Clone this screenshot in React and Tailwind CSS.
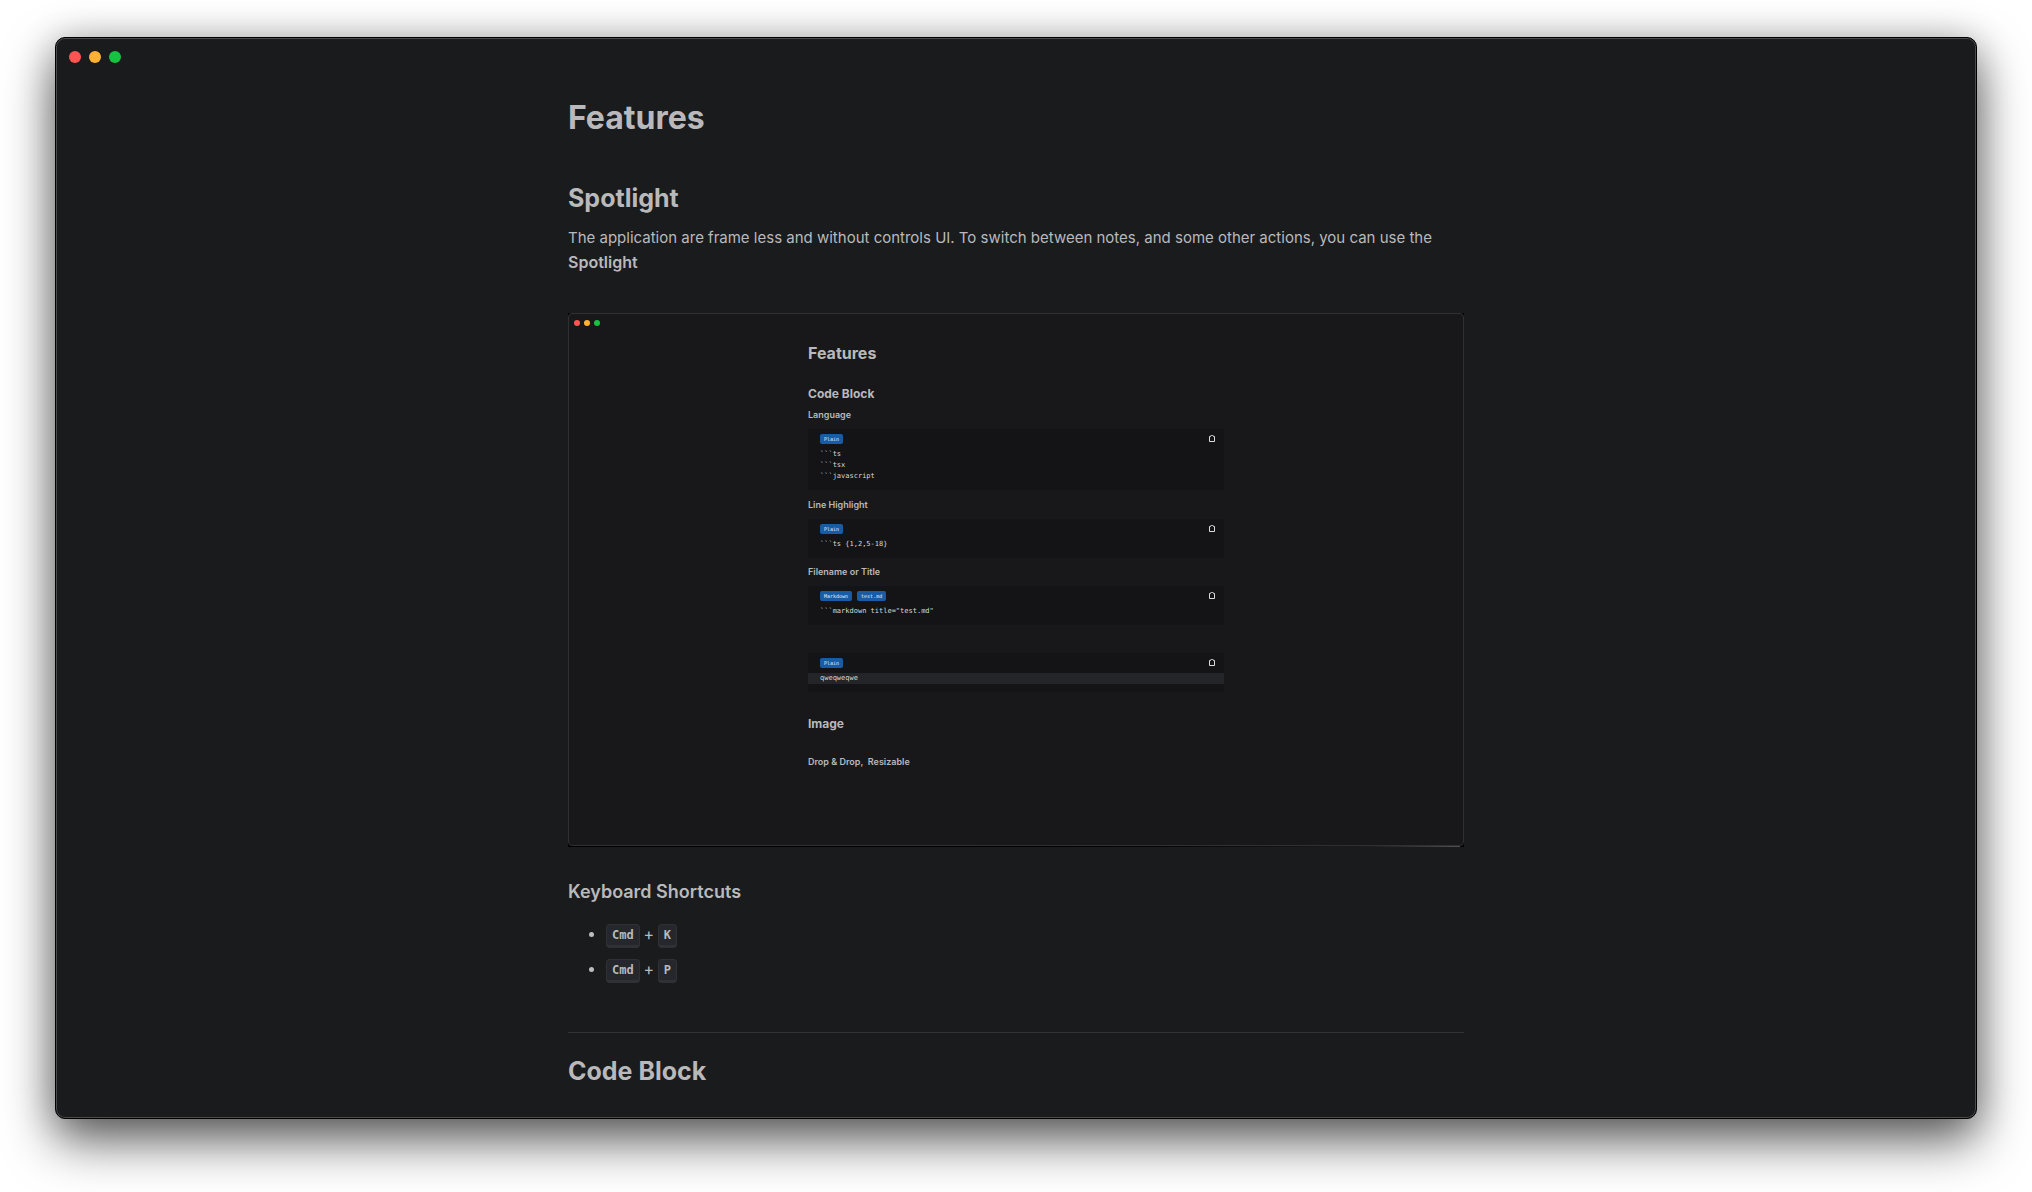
const LIGHTS = [
  { name: "Close", color: "bg-[#ff5552]" },
  { name: "Minimize", color: "bg-[#ffb134]" },
  { name: "Zoom", color: "bg-[#17c240]" },
];

function WindowControls() {
  return (
    <div className="flex gap-2 pt-[13px] pl-[13px]">
      {LIGHTS.map((l) => (
        <button key={l.name} type="button" aria-label={l.name} className={`size-3 rounded-full ${l.color}`} />
      ))}
    </div>
  );
}

function ClipboardIcon() {
  return (
    <svg viewBox="0 0 6 8" className="h-2 w-1.5" fill="none">
      <path d="M1.5 2.5H0.5V7.5H5.5V2.5H4.5" stroke="#dcdcde" strokeWidth="1" strokeLinejoin="round" />
      <path d="M1 3V2L2 1H4L5 2V3H4V2H2V3Z" fill="#b4b4b6" />
    </svg>
  );
}

function CodeBlock({ tags, lines, highlight, className }) {
  return (
    <div
      className={`rounded-xs bg-[#141416] pt-[5px] pb-2 font-['DejaVu_Sans_Mono','Liberation_Mono',monospace] ${className}`}
    >
      <div className="flex items-start justify-between pr-[9px] pl-3">
        <div className="flex gap-[5px]">
          {tags.map((t) => (
            <span key={t} className="rounded-xs bg-[#195ca6] px-1 text-[5px] leading-[10px] text-[#e6f0fa]">
              {t}
            </span>
          ))}
        </div>
        <button type="button" aria-label="Copy code" className="flex">
          <ClipboardIcon />
        </button>
      </div>
      <pre className="mt-[5px] font-[inherit] text-[7px] leading-[11px] text-[#d8d8d8]">
        {lines.map((line) => (
          <code key={line} className={`block pl-3 font-[inherit] ${highlight ? "bg-[#242529]" : ""}`}>
            {line}
          </code>
        ))}
      </pre>
    </div>
  );
}

function MiniHeading({ children, className }) {
  return <h5 className={`text-[9px] leading-3 font-semibold ${className}`}>{children}</h5>;
}

function AppPreview() {
  return (
    <figure className="mt-[38px] bg-black">
      <div className="rounded border border-[#303032] bg-[#18181a] pb-[77px]">
        <div className="flex gap-1 pt-1.5 pl-[5px]">
          {LIGHTS.map((l) => (
            <span key={l.name} className={`size-1.5 rounded-full ${l.color}`} />
          ))}
        </div>
        <div className="mx-auto max-w-[416px]">
          <h3 className="mt-[17px] text-base leading-5 font-bold">Features</h3>
          <h4 className="mt-[23px] text-xs leading-4 font-bold">Code Block</h4>
          <MiniHeading className="mt-[7px]">Language</MiniHeading>
          <CodeBlock className="mt-2" tags={["Plain"]} lines={["```ts", "```tsx", "```javascript"]} />
          <MiniHeading className="mt-[9px]">Line Highlight</MiniHeading>
          <CodeBlock className="mt-2" tags={["Plain"]} lines={["```ts {1,2,5-18}"]} />
          <MiniHeading className="mt-2">Filename or Title</MiniHeading>
          <CodeBlock className="mt-2" tags={["Markdown", "test.md"]} lines={['```markdown title="test.md"']} />
          <CodeBlock className="mt-7" tags={["Plain"]} lines={["qweqweqwe"]} highlight />
          <h4 className="mt-6 text-xs leading-4 font-bold">Image</h4>
          <MiniHeading className="mt-6">Drop &amp; Drop,&nbsp; Resizable</MiniHeading>
        </div>
      </div>
      <div className="mr-1 h-px bg-linear-to-r from-black from-40% via-[#1c1c1c] via-90% to-[#505050]" />
    </figure>
  );
}

function Kbd({ children }) {
  return (
    <kbd className="rounded border border-b-[3px] border-[#303135] bg-[#26272c] px-[5px] font-['DejaVu_Sans_Mono','Liberation_Mono',monospace] text-xs leading-5 font-bold">
      {children}
    </kbd>
  );
}

function Shortcut({ keys }) {
  return (
    <li className="flex items-center">
      <span className="mr-3 mb-1 size-[5px] rounded-full bg-[#bdbdc0]" />
      <Kbd>{keys[0]}</Kbd>
      <span className="w-[18px] pb-1 text-center leading-5">+</span>
      <Kbd>{keys[1]}</Kbd>
    </li>
  );
}

export default function App() {
  return (
    <div className="flex h-screen flex-col bg-white px-[55px] pt-[37px] pb-[73px] font-['Inter',sans-serif] text-[#b9b9bc]">
      <main className="min-h-0 flex-1 overflow-hidden rounded-[10px] border border-black bg-[#1a1b1d] shadow-[inset_0_0_0_1px_#4c4c4e,0_22px_50px_rgba(0,0,0,0.62),0_0_36px_rgba(0,0,0,0.2)]">
        <WindowControls />
        <article className="mx-auto max-w-4xl">
          <h1 className="mt-[35px] text-[32px] leading-10 font-bold">Features</h1>
          <h2 className="mt-[43px] text-[25px] leading-[34px] font-bold">Spotlight</h2>
          <p className="mt-2.5 text-[15px] leading-[25px]">
            The application are frame less and without controls UI. To switch between notes, and some other actions, you
            can use the <strong className="text-base leading-6 font-semibold">Spotlight</strong>
          </p>
          <AppPreview />
          <h3 className="mt-[31px] text-lg leading-7 font-semibold">Keyboard Shortcuts</h3>
          <ul className="mt-[18px] flex flex-col gap-[11px] pl-[21px]">
            <Shortcut keys={["Cmd", "K"]} />
            <Shortcut keys={["Cmd", "P"]} />
          </ul>
          <hr className="mt-[49px] border-[#323335]" />
          <h2 className="mt-[21px] text-[25px] leading-[34px] font-bold">Code Block</h2>
        </article>
      </main>
    </div>
  );
}
